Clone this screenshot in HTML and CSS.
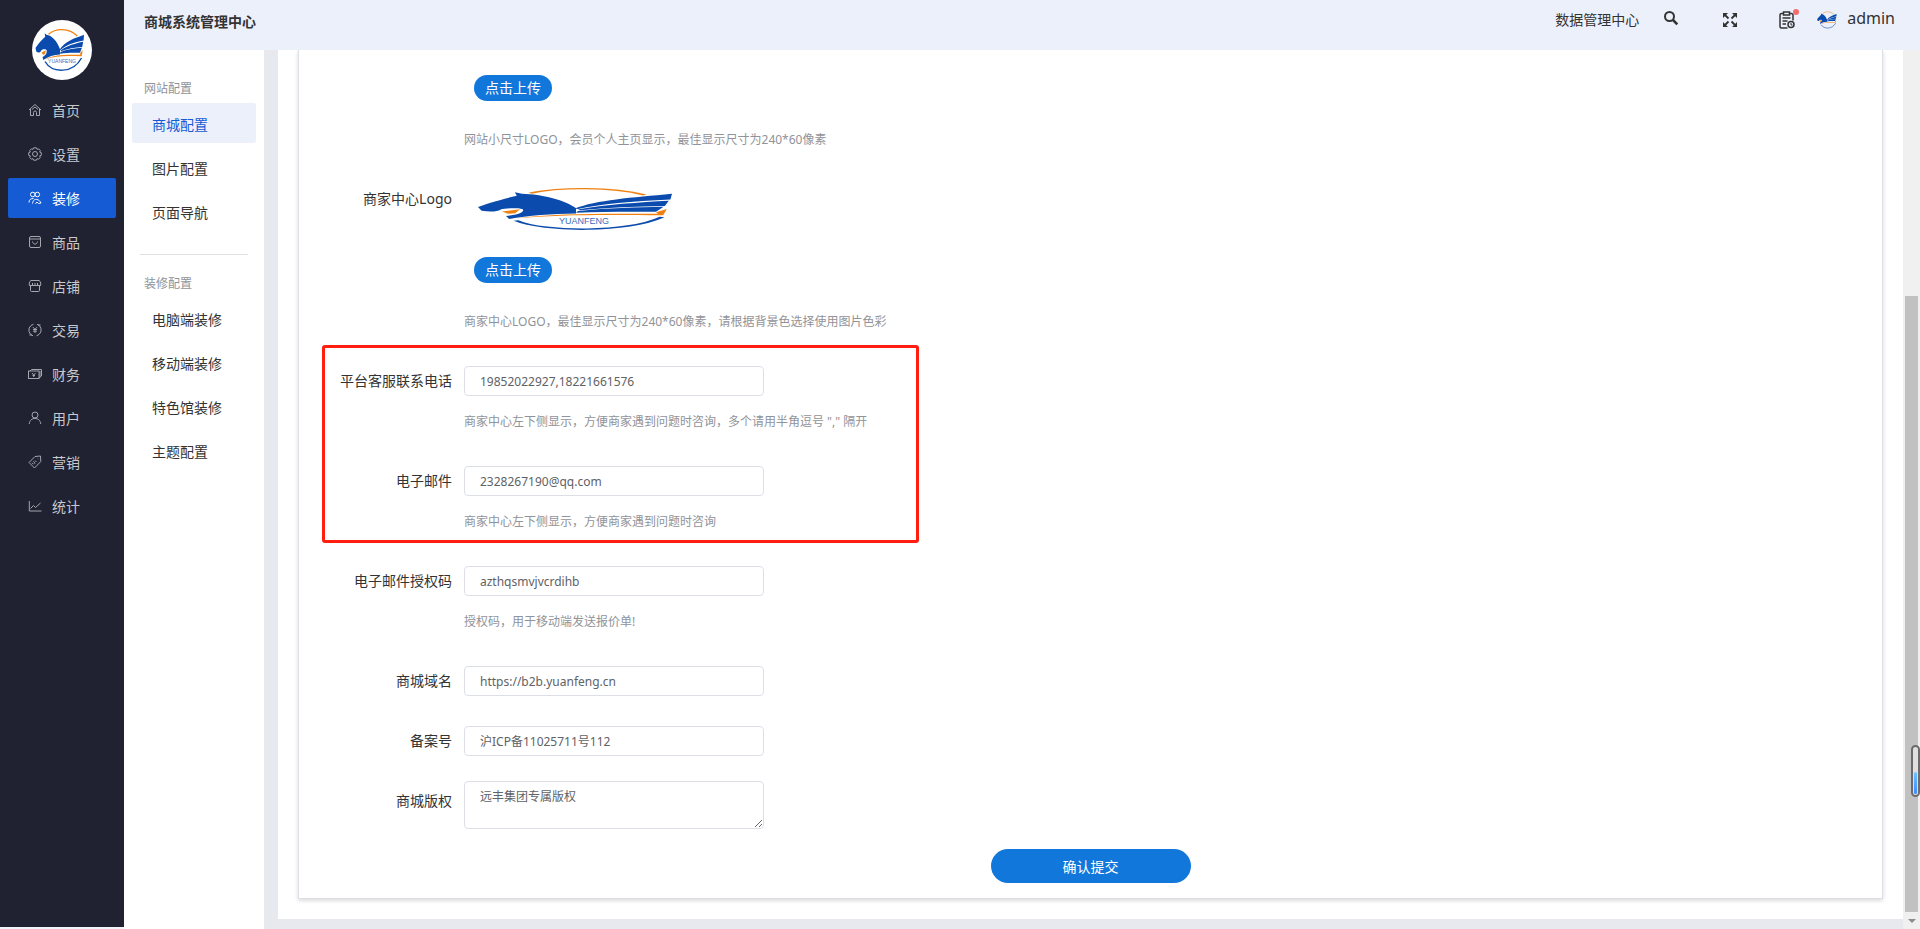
FILE: index.html
```html
<!DOCTYPE html>
<html lang="zh-CN">
<head>
    <meta charset="UTF-8">
    <meta name="viewport" content="width=device-width, initial-scale=1.0">
    <title>商城系统管理中心</title>
    <link rel="stylesheet" href="styles.css">
</head>
<body>
    <!-- Shared logo mark, used in the sidebar, the header and the form -->
    <svg class="defs" width="0" height="0" aria-hidden="true">
        <symbol id="mark" viewBox="0 0 60 60" preserveAspectRatio="none">
            <path d="M16.500 14.200C24 7.800 37 7.800 45.200 16" fill="none" stroke="#f08010" stroke-width="1.200"/>
            <path d="M13 41.500C20 53.300 41 54 49.500 38" fill="none" stroke="#0a4bad" stroke-width="1.400"/>
            <path d="M12.700 13.200L14.500 14.800C19.500 15.200 25.500 21.500 28 29.300L28 34.600C22 35 16 36.500 11.300 40L10.500 37C13.500 36 15.200 33 14.700 30.300L13.600 29.300C11.500 29 10 29.500 9.200 30.500C8.300 32.800 6.500 33 4.400 31.800L3.500 28C5 25.500 9 20.500 13.200 16.800Z" fill="#0a4bad"/>
            <path d="M27.700 29.500C33 21 42 18.500 52 14.700L51.600 20.500C42 22.500 34 25 28.500 29.900Z" fill="#0a4bad"/>
            <path d="M28.500 30.500C35 25.500 44 23.200 51.200 21.700L50.200 26.900C43 27.500 36 28.500 29 31.200Z" fill="#0a4bad"/>
            <path d="M28.500 32C36 29 43 28.200 49.900 27.800L48 32.800C42 32.500 35 32.500 28 33.800Z" fill="#0a4bad"/>
            <path d="M9.500 32.500L14 30.300L12.800 34.300L11 34.800Z" fill="#f08010"/>
            <path d="M13 39.500C23 33.700 37 34.800 48.500 34.800L48 33.200L50.700 30L49.800 36.300C38 36 24 35 13 39.500Z" fill="#f08010"/>
        </symbol>
    </svg>

    <div class="layout">
        <nav class="sidebar">
            <a class="logo" href="#" aria-label="YUANFENG">
                <svg width="60" height="60" viewBox="0 0 60 60">
                    <use href="#mark" width="60" height="60"/>
                    <text x="30" y="43" class="logo-text">YUANFENG</text>
                </svg>
            </a>
            <a class="nav-item" href="#">
                <svg class="icon" viewBox="0 0 14 14"><path d="M1 7L7 1.500L13 7M2.500 6V12.500H5.500V9.500A1.500 1.500 0 0 1 8.500 9.500V12.500H11.500V6M4 6.500L7 4L10 6.500"/></svg>
                <span>首页</span>
            </a>
            <a class="nav-item" href="#">
                <svg class="icon" viewBox="0 0 14 14"><path d="M5.600 .8H8.400L9 2.300L10.700 1.900L12.300 3.500L11.700 5.100L13.300 5.700V8.300L11.700 8.900L12.300 10.500L10.700 12.100L9 11.700L8.400 13.200H5.600L5 11.700L3.300 12.100L1.700 10.500L2.300 8.900L.7 8.300V5.700L2.300 5.100L1.700 3.500L3.300 1.900L5 2.300Z"/><circle cx="7" cy="7" r="2.500"/></svg>
                <span>设置</span>
            </a>
            <a class="nav-item active" href="#">
                <svg class="icon" viewBox="0 0 14 14"><circle cx="4.800" cy="3.500" r="2.300"/><circle cx="9.300" cy="3.500" r="2.300"/><path d="M1 11.500C1 8.500 3 7.500 5.500 7.500M4.500 12.500C5 9 7 8 9 8.500C11 9 12 10 13 12L10.500 12.500L9 11L7.500 12.800"/></svg>
                <span>装修</span>
            </a>
            <a class="nav-item" href="#">
                <svg class="icon" viewBox="0 0 14 14"><rect x="1.500" y="1.500" width="11" height="11" rx="1.500"/><path d="M1.500 4H12.500M4.500 6.500C5 10 9 10 9.500 6.500"/></svg>
                <span>商品</span>
            </a>
            <a class="nav-item" href="#">
                <svg class="icon" viewBox="0 0 14 14"><path d="M3 1.500H11Q12.700 2.500 12.700 4V6.500H1.300V4Q1.300 2.500 3 1.500ZM4.500 6.500V4M7 6.500V4M9.500 6.500V4M2.500 7V11.500Q2.500 12.500 3.500 12.500H10.500Q11.500 12.500 11.500 11.500V7"/></svg>
                <span>店铺</span>
            </a>
            <a class="nav-item" href="#">
                <svg class="icon" viewBox="0 0 14 14"><path d="M5 12.800A6 6 0 0 1 3 2.500L5.500 1.200M9 1.200A6 6 0 0 1 11 11.500L8.500 12.800M1.500 12H4M12.500 2H10M5 4.200L7 6.300L9 4.200M7 6.300V10M5 6.500H9M5 8.200H9"/></svg>
                <span>交易</span>
            </a>
            <a class="nav-item" href="#">
                <svg class="icon" viewBox="0 0 14 14"><rect x=".5" y="4" width="10.500" height="7.500"/><path d="M2 4L3.500 2.500H13.500V9L11 11M4 6L5.700 8L7.500 6M5.700 8V10M4.500 8.500H7M12 4V10"/></svg>
                <span>财务</span>
            </a>
            <a class="nav-item" href="#">
                <svg class="icon" viewBox="0 0 14 14"><circle cx="7" cy="4" r="3"/><path d="M1.200 13C1.800 9 4 7.500 7 7.500S12.200 9 12.800 13"/></svg>
                <span>用户</span>
            </a>
            <a class="nav-item" href="#">
                <svg class="icon" viewBox="0 0 14 14"><path d="M1 7.500L7 1.500L12.500 1L12.800 6.500L6.500 13Z"/><path d="M4 7.800L5.500 9.300M5.500 6.300L7 8.800M7 5.500L8.500 7M10 3.700L10.500 4.200"/></svg>
                <span>营销</span>
            </a>
            <a class="nav-item" href="#">
                <svg class="icon" viewBox="0 0 14 14"><path d="M1.300 2V12H13.500M2.500 9.500L5.500 6.500L7.500 8.500L12.500 4"/></svg>
                <span>统计</span>
            </a>
        </nav>

        <div class="page">
            <header class="topbar">
                <h1 class="topbar-title">商城系统管理中心</h1>
                <div class="topbar-right">
                    <a class="center-link" href="#">数据管理中心</a>
                    <button class="icon-btn search" type="button" aria-label="搜索">
                        <svg width="16" height="16" viewBox="0 0 16 16" fill="none" stroke="#333"><circle cx="6.500" cy="6.500" r="4.500" stroke-width="2"/><path d="M10 10L14.300 14.300" stroke-width="2.500"/></svg>
                    </button>
                    <button class="icon-btn fullscreen" type="button" aria-label="全屏">
                        <svg width="14" height="14" viewBox="0 0 14 14" fill="#333" stroke="#333"><path d="M0 0H5L0 5ZM14 0V5L9 0ZM0 14V9L5 14ZM14 14H9L14 9Z" stroke="none"/><path d="M2 2L5.500 5.500M12 2L8.500 5.500M2 12L5.500 8.500M12 12L8.500 8.500" stroke-width="1.800"/></svg>
                    </button>
                    <button class="icon-btn notice" type="button" aria-label="待办">
                        <svg width="16" height="18" viewBox="0 0 16 18" fill="none" stroke="#333" stroke-width="1.500"><path d="M4 2.500H2.500A1.500 1.500 0 0 0 1 4V15.500A1.500 1.500 0 0 0 2.500 17H8.500M11 2.500H12.500A1.500 1.500 0 0 1 14 4V9.500M4.500 1H10.500V4H4.500ZM3.500 7H11.500M3.500 10H8.500M3.500 13H7"/><circle cx="12" cy="13.500" r="3"/><path d="M12 12V14H13.500" stroke-width="1"/></svg>
                    </button>
                    <a class="user" href="#">
                        <svg width="20" height="20" viewBox="3 5 50 50" aria-hidden="true"><use href="#mark" width="60" height="60"/></svg>
                        <span>admin</span>
                    </a>
                </div>
            </header>

            <div class="body">
                <aside class="subnav">
                    <h2 class="subnav-title">网站配置</h2>
                    <a class="subnav-item active" href="#">商城配置</a>
                    <a class="subnav-item" href="#">图片配置</a>
                    <a class="subnav-item" href="#">页面导航</a>
                    <hr>
                    <h2 class="subnav-title">装修配置</h2>
                    <a class="subnav-item" href="#">电脑端装修</a>
                    <a class="subnav-item" href="#">移动端装修</a>
                    <a class="subnav-item" href="#">特色馆装修</a>
                    <a class="subnav-item" href="#">主题配置</a>
                </aside>

                <main class="content">
                    <div class="panel">
                        <form class="card">
                            <div class="form-item first">
                                <div class="form-content">
                                    <button class="upload-btn" type="button">点击上传</button>
                                    <p class="hint">网站小尺寸LOGO，会员个人主页显示，最佳显示尺寸为240*60像素</p>
                                </div>
                            </div>

                            <div class="form-item">
                                <label class="form-label" for="seller-logo">商家中心Logo</label>
                                <div class="form-content">
                                    <svg class="preview" width="240" height="60" viewBox="0 0 240 60">
                                        <use href="#mark" width="240" height="60"/>
                                        <text x="120" y="45" class="preview-text">YUANFENG</text>
                                    </svg>
                                    <button class="upload-btn" id="seller-logo" type="button">点击上传</button>
                                    <p class="hint">商家中心LOGO，最佳显示尺寸为240*60像素，请根据背景色选择使用图片色彩</p>
                                </div>
                            </div>

                            <div class="marked">
                                <div class="form-item">
                                    <label class="form-label" for="phone">平台客服联系电话</label>
                                    <div class="form-content">
                                        <input class="text-input" id="phone" type="text" value="19852022927,18221661576">
                                        <p class="hint">商家中心左下侧显示，方便商家遇到问题时咨询，多个请用半角逗号 "," 隔开</p>
                                    </div>
                                </div>
                                <div class="form-item">
                                    <label class="form-label" for="email">电子邮件</label>
                                    <div class="form-content">
                                        <input class="text-input" id="email" type="text" value="2328267190@qq.com">
                                        <p class="hint">商家中心左下侧显示，方便商家遇到问题时咨询</p>
                                    </div>
                                </div>
                            </div>

                            <div class="form-item">
                                <label class="form-label" for="auth-code">电子邮件授权码</label>
                                <div class="form-content">
                                    <input class="text-input" id="auth-code" type="text" value="azthqsmvjvcrdihb">
                                    <p class="hint">授权码，用于移动端发送报价单!</p>
                                </div>
                            </div>

                            <div class="form-item">
                                <label class="form-label" for="domain">商城域名</label>
                                <div class="form-content">
                                    <input class="text-input" id="domain" type="text" value="https://b2b.yuanfeng.cn">
                                </div>
                            </div>

                            <div class="form-item">
                                <label class="form-label" for="icp">备案号</label>
                                <div class="form-content">
                                    <input class="text-input" id="icp" type="text" value="沪ICP备11025711号112">
                                </div>
                            </div>

                            <div class="form-item">
                                <label class="form-label" for="copyright">商城版权</label>
                                <div class="form-content">
                                    <textarea class="text-area" id="copyright">远丰集团专属版权</textarea>
                                </div>
                            </div>

                            <button class="submit-btn" type="submit">确认提交</button>
                        </form>
                    </div>
                </main>

                <!-- Scroll track with its thumb and arrow -->
                <div class="scrollbar">
                    <div class="thumb"></div>
                    <svg width="8" height="4" viewBox="0 0 8 4"><path d="M0 0H8L4 4Z" fill="#8b8b8b"/></svg>
                </div>
            </div>
        </div>
    </div>

    <div class="level"><div class="level-fill"></div></div>
</body>
</html>
```

FILE: styles.css
```css
*,
*::after {
    box-sizing: border-box;
}

body {
    margin: 0;
    background: #f3f3fa;
    color: #333;
    font-family: "Noto Sans", "Noto Sans CJK SC", sans-serif;
    font-size: 14px;
    overflow: hidden;
}

a {
    color: inherit;
    text-decoration: none;
}

button,
input,
textarea {
    font-family: inherit;
}

button {
    cursor: pointer;
}

.defs {
    position: absolute;
}

.layout {
    display: flex;
    height: 100vh;
}

/* Dark main menu */
.sidebar {
    flex: none;
    width: 124px;
    margin-bottom: 2px;
    padding: 20px 8px 0;
    background: #202131;
}

.logo {
    display: block;
    width: 60px;
    height: 60px;
    margin: 0 auto 10px;
    border-radius: 50%;
    background: #fff;
    overflow: hidden;
}

.logo-text,
.preview-text {
    font-family: "Liberation Sans", sans-serif;
    fill: #3a6dbd;
    text-anchor: middle;
}

.logo-text {
    font-size: 5px;
}

.preview-text {
    font-size: 9px;
}

.nav-item {
    display: flex;
    align-items: center;
    gap: 10px;
    height: 40px;
    margin-bottom: 4px;
    padding-left: 20px;
    border-radius: 2px;
    color: #c8c9cc;
}

.nav-item.active {
    background: #155bd4;
    color: #fff;
}

.icon {
    width: 14px;
    height: 14px;
    fill: none;
    stroke: #a5a6ae;
    stroke-width: 1;
}

.active .icon {
    stroke: #fff;
}

.page {
    flex: 1;
    display: flex;
    flex-direction: column;
    min-width: 0;
}

/* Top bar */
.topbar {
    flex: none;
    display: flex;
    justify-content: space-between;
    align-items: flex-start;
    height: 50px;
    padding: 0 25px 0 20px;
    background: #ecf0fb;
}

.topbar-title {
    margin: 0;
    font-size: 14px;
    font-weight: bold;
    line-height: 44px;
}

.topbar-right {
    display: flex;
    align-items: center;
    height: 40px;
}

.center-link {
    padding-bottom: 2px;
}

.icon-btn {
    display: flex;
    padding: 0;
    border: none;
    background: none;
}

.search {
    margin-left: 24px;
    padding-bottom: 4px;
}

.fullscreen {
    margin-left: 44px;
}

.notice {
    position: relative;
    margin-left: 42px;
}

.notice::after {
    content: "";
    position: absolute;
    top: -2px;
    right: -4px;
    width: 6px;
    height: 6px;
    border-radius: 50%;
    background: #f56c6c;
}

.user {
    display: flex;
    align-items: center;
    gap: 10px;
    margin-left: 22px;
    font-size: 16px;
}

.user span {
    padding-bottom: 4px;
}

.body {
    flex: 1;
    display: flex;
    min-height: 0;
}

/* Second level menu */
.subnav {
    flex: none;
    width: 140px;
    padding: 28px 8px 0;
    background: #fff;
}

.subnav-title {
    margin: 0 0 5px;
    padding-left: 12px;
    color: #909399;
    font-size: 12px;
    font-weight: normal;
    height: 20px;
    line-height: 22px;
}

.subnav-item {
    display: block;
    height: 40px;
    margin-bottom: 4px;
    padding-left: 20px;
    border-radius: 2px;
    line-height: 43px;
}

.subnav-item.active {
    background: #ecf0fb;
    color: #155bd4;
}

.subnav hr {
    height: 1px;
    margin: 23px 8px 18px;
    border: none;
    background: #dfe0e4;
}

/* Form */
.content {
    flex: 1;
    min-width: 0;
    padding: 0 0 10px 14px;
    background: #e8e9ee;
    overflow: hidden;
}

.panel {
    height: 100%;
    padding: 0 20px 20px;
    background: #fff;
}

.card {
    height: 100%;
    border: 1px solid #dcdfe6;
    border-top: none;
    box-shadow: 0 2px 4px rgba(0, 0, 0, 0.12), 0 0 6px rgba(0, 0, 0, 0.04);
}

.form-item {
    display: flex;
    margin-bottom: 20px;
}

.form-item.first {
    padding: 25px 0 0 165px;
}

.form-label {
    flex: none;
    width: 165px;
    padding-right: 12px;
    line-height: 40px;
    text-align: right;
}

.form-content {
    display: flex;
    flex-direction: column;
    align-items: flex-start;
}

.preview {
    margin-bottom: 18px;
}

.upload-btn {
    height: 26px;
    margin: 0 10px 18px;
    padding: 0 11px;
    border: none;
    border-radius: 13px;
    background: #1277db;
    color: #fff;
    font-size: 14px;
    line-height: 26px;
}

.hint {
    height: 40px;
    margin: 0;
    color: #909399;
    font-size: 12px;
    line-height: 42px;
}

.text-input,
.text-area {
    width: 300px;
    border: 1px solid #dcdfe6;
    border-radius: 4px;
    background: #fff;
    color: #606266;
    font-size: 12px;
}

.text-input {
    height: 30px;
    margin: 5px 0;
    padding: 0 15px;
}

.text-area {
    display: block;
    height: 48px;
    padding: 5px 15px;
    line-height: 20px;
    resize: vertical;
}

/* Red frame round the contact fields */
.marked {
    position: relative;
}

.marked::after {
    content: "";
    position: absolute;
    top: -16px;
    bottom: -2px;
    left: 23px;
    width: 597px;
    border: 3px solid #ff1e10;
    border-radius: 3px;
    pointer-events: none;
}

.submit-btn {
    display: block;
    width: 200px;
    height: 34px;
    margin: 0 auto;
    border: none;
    border-radius: 17px;
    background: #1277db;
    color: #fff;
    font-size: 14px;
}

.scrollbar {
    flex: none;
    display: flex;
    flex-direction: column;
    align-items: center;
    gap: 7px;
    width: 17px;
    padding: 246px 0 6px;
    background: #f0f0f0;
}

.thumb {
    flex: 1;
    width: 13px;
    background: #c1c1c1;
}

/* Level gauge floating at the window edge */
.level {
    position: absolute;
    top: 745px;
    right: 0;
    display: flex;
    align-items: flex-end;
    width: 9px;
    height: 52px;
    padding: 1px;
    border: 2px solid #6b6b6b;
    border-radius: 5px;
    background: #e0e0e0;
}

.level-fill {
    width: 100%;
    height: 22px;
    border-radius: 2px;
    background: linear-gradient(#6cc4ff, #3d8bff);
}
```
